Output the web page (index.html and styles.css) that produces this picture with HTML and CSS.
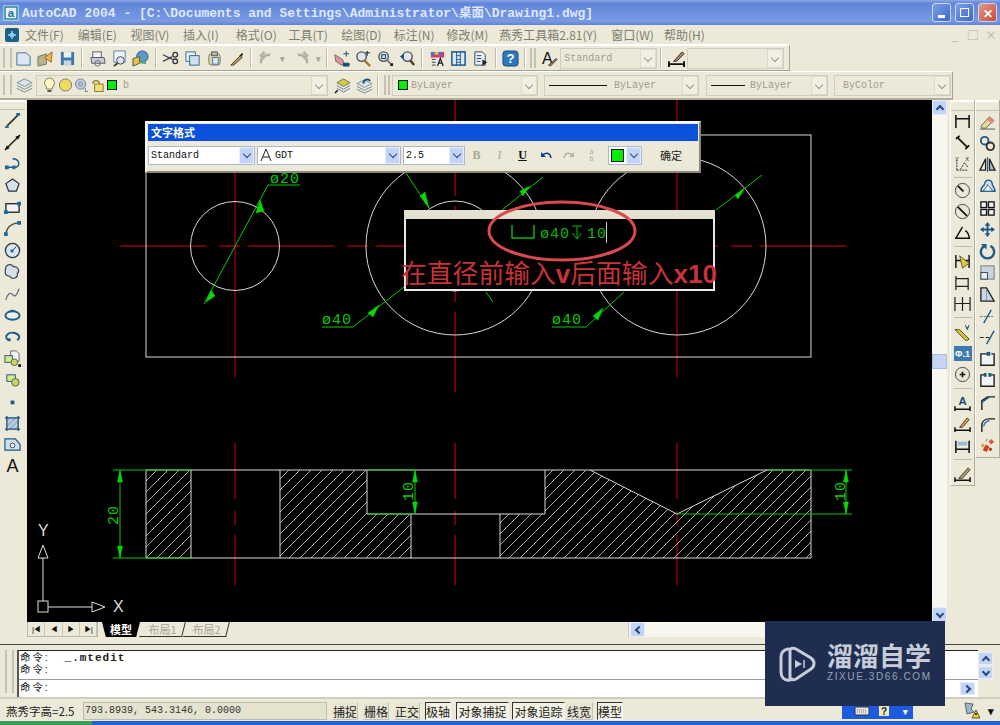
FILE: index.html
```html
<!DOCTYPE html>
<html lang="zh">
<head>
<meta charset="utf-8">
<title>AutoCAD 2004</title>
<link rel="stylesheet" href="styles.css">
</head>
<body>
<div class="app">
  <header class="titlebar">
    <svg class="app-icon" viewBox="0 0 18 18"><rect x="1" y="1" width="16" height="16" fill="#1b6f96" stroke="#cfe" /><rect x="3" y="3" width="12" height="12" fill="#e8f2f6"/><text x="9" y="14" class="app-a">a</text></svg>
    <span class="title-text">AutoCAD 2004 - [C:\Documents and Settings\Administrator\<span class="cjk">桌面</span>\Drawing1.dwg]</span>
    <div class="win-btns">
      <span class="win-btn"><i class="win-min"></i></span>
      <span class="win-btn"><i class="win-res"></i></span>
      <span class="win-btn win-close">✕</span>
    </div>
  </header>

  <nav class="menubar">
    <svg class="doc-icon" viewBox="0 0 16 16"><rect x="1" y="1" width="14" height="14" rx="2" fill="#1c5f88"/><path d="M4 8h8M8 4v8" stroke="#fff"/><rect x="6" y="6" width="4" height="4" fill="#7fd0f0"/></svg>
    <span class="m">文件(F)</span><span class="m">编辑(E)</span><span class="m">视图(V)</span><span class="m">插入(I)</span><span class="m">格式(O)</span><span class="m">工具(T)</span><span class="m">绘图(D)</span><span class="m">标注(N)</span><span class="m">修改(M)</span><span class="m m-wide">燕秀工具箱2.81(Y)</span><span class="m">窗口(W)</span><span class="m">帮助(H)</span>
    <span class="doc-btns"><span>_</span><span>□</span><span>×</span></span>
  </nav>

  <div class="toolbar tb1">
    <i class="grip"></i>
    <span class="tool"><svg viewBox="0 0 18 18"><path d="M2 3h10l4 4v9H2z" fill="#dbe7f3" stroke="#3a6d9a"/></svg></span>
    <span class="tool"><svg viewBox="0 0 18 18"><path d="M1 7l9-3v11l-9 2z" fill="#b9b28c" stroke="#776"/><path d="M8 8l8-6-1 11z" fill="#e8b84c" stroke="#a06820"/></svg></span>
    <span class="tool"><svg viewBox="0 0 18 18"><rect x="2" y="2" width="14" height="14" fill="#3d78ad"/><rect x="5" y="2" width="8" height="6" fill="#e9f0f6"/><rect x="5" y="11" width="8" height="5" fill="#c9d6e3"/></svg></span>
    <i class="sep"></i>
    <span class="tool"><svg viewBox="0 0 18 18"><rect x="4" y="2" width="9" height="6" fill="#f4f4f4" stroke="#556"/><path d="M2 8h14l1 6H3z" fill="#c9cfd8" stroke="#556"/><circle cx="9" cy="14" r="3" fill="none" stroke="#667"/></svg></span>
    <span class="tool"><svg viewBox="0 0 18 18"><path d="M3 1h12v12H3z" fill="#eef3f8" stroke="#5a7fa2"/><circle cx="10" cy="11" r="4" fill="#d9e6f0" stroke="#445"/><path d="M7 14l-4 3" stroke="#443" stroke-width="2"/></svg></span>
    <span class="tool"><svg viewBox="0 0 18 18"><circle cx="11" cy="7" r="6" fill="#5b9bcb" stroke="#357"/><path d="M1 9l7-2v7l-7 3z" fill="#e4c24a" stroke="#553"/><path d="M8 13l7 1" stroke="#6a6" stroke-width="2"/></svg></span>
    <i class="sep"></i>
    <span class="tool"><svg viewBox="0 0 18 18"><path d="M1 5l10 5M1 12l10-5" stroke="#445" stroke-width="1.4"/><circle cx="14" cy="5" r="2.5" fill="none" stroke="#334" stroke-width="1.4"/><circle cx="14" cy="12" r="2.5" fill="none" stroke="#334" stroke-width="1.4"/></svg></span>
    <span class="tool"><svg viewBox="0 0 18 18"><rect x="2" y="2" width="10" height="10" fill="#e5edf5" stroke="#3f719d"/><rect x="6" y="6" width="10" height="10" fill="#d2e0ee" stroke="#2f618d"/></svg></span>
    <span class="tool"><svg viewBox="0 0 18 18"><rect x="3" y="4" width="12" height="12" rx="3" fill="#e5d59a" stroke="#776"/><rect x="6" y="2" width="6" height="4" fill="#bbb" stroke="#555"/><rect x="7" y="8" width="6" height="7" fill="#dbe7f3" stroke="#47a"/></svg></span>
    <span class="tool"><svg viewBox="0 0 18 18"><path d="M3 16L13 6l2 2L6 16z" fill="#c5a063" stroke="#432"/><path d="M12 6l3-3 1 2-2 2z" fill="#222"/></svg></span>
    <i class="sep"></i>
    <span class="tool tool-mid"><svg viewBox="0 0 18 18"><path d="M4 14C4 8 7 5 14 5M8 2L4 6l4 3" fill="none" stroke="#b4b0a0" stroke-width="2.5"/></svg></span><b class="mini mini-gap">▾</b>
    <span class="tool tool-mid"><svg viewBox="0 0 18 18"><path d="M14 14C14 8 11 5 4 5M10 2l4 4-4 3" fill="none" stroke="#b4b0a0" stroke-width="2.5"/></svg></span><b class="mini mini-end">▾</b>
    <i class="sep"></i>
    <span class="tool"><svg viewBox="0 0 18 18"><path d="M2 5l8 5 2 5-3 1-6-4z" fill="#d49aa0" stroke="#8a5a60"/><path d="M14 1v6M11 4h6M11 14h6v3h-6z" stroke="#14497a" fill="#14497a"/></svg></span>
    <span class="tool"><svg viewBox="0 0 18 18"><circle cx="7" cy="7" r="5" fill="#dde8ef" stroke="#555" stroke-width="1.5"/><path d="M10 11l6 6" stroke="#a07830" stroke-width="2.5"/><path d="M13 1v5M11 3h5" stroke="#123"/></svg></span>
    <span class="tool"><svg viewBox="0 0 18 18"><circle cx="7" cy="7" r="5" fill="#cfe0ec" stroke="#555" stroke-width="1.5"/><rect x="5" y="5" width="4" height="4" fill="none" stroke="#136"/><path d="M11 11l3 3" stroke="#777" stroke-width="2"/><path d="M14 14h3v3h-3z" fill="#222"/></svg></span>
    <span class="tool"><svg viewBox="0 0 18 18"><circle cx="9" cy="7" r="5" fill="#dde8ef" stroke="#555" stroke-width="1.5"/><path d="M12 11l4 5" stroke="#5a3a20" stroke-width="2.5"/><path d="M1 7l4-3v6z" fill="#14497a"/></svg></span>
    <i class="sep"></i>
    <span class="tool"><svg viewBox="0 0 18 18"><path d="M2 2h14v6H2z" fill="#d03a7a"/><path d="M2 2h4v3H2zM10 2h4v3h-4z" fill="#3a7ad0"/><path d="M6 2h4v3H6z" fill="#e0c830"/><path d="M3 10h4M3 13h4M3 16h4" stroke="#246"/><path d="M9 17l3-8 3 8M10 14h4" fill="none" stroke="#123" stroke-width="1.3"/></svg></span>
    <span class="tool"><svg viewBox="0 0 18 18"><rect x="2" y="2" width="14" height="14" fill="#dce8f2" stroke="#1d5a8a" stroke-width="1.6"/><path d="M7 2v14M11 2v14M7 6h4M7 10h4M7 13h4" stroke="#1d5a8a"/></svg></span>
    <span class="tool"><svg viewBox="0 0 18 18"><path d="M3 2h8l3 3v11H3z" fill="#eef2f6" stroke="#345"/><path d="M5 6h5M5 9h5M5 12h4" stroke="#246"/><path d="M11 10l5 3-5 4z" fill="#123"/></svg></span>
    <i class="sep"></i>
    <span class="tool"><svg viewBox="0 0 18 18"><rect x="1" y="1" width="16" height="16" rx="3" fill="#2b79bb" stroke="#154d7d"/><text x="9" y="14" class="help-q">?</text></svg></span>
    <i class="sep sep-end"></i>
    <i class="grip grip-sm"></i>
    <span class="tool"><svg viewBox="0 0 18 18"><text x="1" y="15" class="glyph-a">A</text><path d="M8 16l8-7 1 1-7 7z" fill="#a88a50" stroke="#433"/></svg></span>
    <span class="combo combo-std"><span class="combo-text">Standard</span><span class="arrow"></span></span>
    <i class="sep"></i>
    <span class="tool"><svg viewBox="0 0 18 18"><path d="M1 15h16M1 12v6M17 12v6" stroke="#111" stroke-width="2"/><path d="M6 12L15 2l2 2-8 8z" fill="#b09060" stroke="#322"/></svg></span>
    <span class="combo combo-dim"><span class="arrow"></span></span>
  </div>

  <div class="toolbar tb2">
    <i class="grip"></i>
    <span class="tool tool-l"><svg viewBox="0 0 18 18"><path d="M1 6l8-4 8 4-8 4z" fill="#dbe4ea" stroke="#78909c"/><path d="M1 9l8 4 8-4M1 12l8 4 8-4" fill="none" stroke="#6d8797"/></svg></span>
    <span class="combo combo-layer">
      <svg class="mi" viewBox="0 0 14 16"><path d="M7 1a5 5 0 0 1 3 9v2H4v-2A5 5 0 0 1 7 1z" fill="#fbf7c8" stroke="#8a8450"/><path d="M5 14h4" stroke="#555" stroke-width="2"/></svg>
      <svg class="mi" viewBox="0 0 16 16"><circle cx="8" cy="8" r="6.5" fill="#efdc5c" stroke="#777"/></svg>
      <svg class="mi" viewBox="0 0 16 16"><circle cx="7" cy="7" r="5.5" fill="#bcd" stroke="#789"/><circle cx="7" cy="7" r="2" fill="none" stroke="#789"/><path d="M12 11v4h3" fill="none" stroke="#678"/></svg>
      <svg class="mi" viewBox="0 0 16 16"><path d="M3 7a3.500 3.500 0 0 1 7 0" fill="none" stroke="#98862c" stroke-width="1.500"/><rect x="5" y="7" width="9" height="8" fill="#eee07a" stroke="#887620"/></svg>
      <i class="swatch"></i><span class="combo-text layer-name">b</span><span class="arrow"></span>
    </span>
    <span class="tool tool-l"><svg viewBox="0 0 18 18"><path d="M3 6l7-4 7 4-7 4z" fill="#d7ca55" stroke="#66803c"/><path d="M3 9l7 4 7-4M3 12l7 4 7-4" fill="none" stroke="#5d7fa0"/><path d="M1 17l3-3" stroke="#111" stroke-width="1.500"/></svg></span>
    <span class="tool tool-l"><svg viewBox="0 0 18 18"><path d="M1 7l8-4 8 4-8 4z" fill="#dbe4ea" stroke="#78909c"/><path d="M1 10l8 4 8-4M1 13l8 4 8-4" fill="none" stroke="#6d8797"/><path d="M8 7a4 4 0 0 1 7-3" fill="none" stroke="#14497a" stroke-width="2"/></svg></span>
    <i class="sep sep-tight"></i><i class="grip grip-sm"></i>
    <span class="combo combo-color"><i class="swatch swatch-bl"></i><span class="combo-text">ByLayer</span><span class="arrow"></span></span>
    <span class="combo combo-line"><i class="ln ln-l"></i><span class="combo-text">ByLayer</span><span class="arrow"></span></span>
    <span class="combo combo-weight"><i class="ln ln-s"></i><span class="combo-text">ByLayer</span><span class="arrow"></span></span>
    <span class="combo combo-plot"><span class="combo-text">ByColor</span><span class="arrow"></span></span>
  </div>

  <div class="main">
    <aside class="side side-left">
      <i class="vgrip"></i>
      <span class="slot"><svg viewBox="0 0 18 18"><path d="M3 15L15 3" stroke="#333" stroke-width="1.800"/><path d="M1 15h4v2H1zM13 1h4v3h-4z" fill="#1d6a9a"/></svg></span>
      <span class="slot"><svg viewBox="0 0 18 18"><path d="M1 17L17 1" stroke="#222" stroke-width="1.600"/><path d="M1 17l2-5 3 3zM17 1l-2 5-3-3z" fill="#111"/></svg></span>
      <span class="slot"><svg viewBox="0 0 18 18"><path d="M3 13h8c7 0 6-9-2-9" fill="none" stroke="#1d5a8a" stroke-width="1.500"/><path d="M1 11h4v4H1zM9 11h3v4H9z" fill="#1d6a9a"/></svg></span>
      <span class="slot"><svg viewBox="0 0 18 18"><path d="M9 2l7 5-3 8H5L2 7z" fill="#d8e3ee" stroke="#23303c" stroke-width="1.300"/></svg></span>
      <span class="slot"><svg viewBox="0 0 18 18"><rect x="2" y="5" width="14" height="9" fill="#eef2f6" stroke="#222" stroke-width="1.400"/><path d="M0 12h4v4H0zM14 3h4v4h-4z" fill="#1d6a9a"/></svg></span>
      <span class="slot"><svg viewBox="0 0 18 18"><path d="M2 17C2 9 7 4 15 3" fill="none" stroke="#444" stroke-width="1.500"/><path d="M0 13h4v4H0zM14 1h4v4h-4z" fill="#1d6a9a"/></svg></span>
      <span class="slot"><svg viewBox="0 0 18 18"><circle cx="9" cy="9" r="7.500" fill="#dde7ef" stroke="#2a3a48" stroke-width="1.400"/><path d="M9 9l4-4" stroke="#333"/><rect x="7" y="8" width="3" height="3" fill="#1d6a9a"/></svg></span>
      <span class="slot"><svg viewBox="0 0 18 18"><path d="M2 4c3-4 7-2 8 0 5-1 7 5 4 7 2 5-6 7-8 3-6 0-5-6-4-10z" fill="#d5e0ea" stroke="#3a4a58" stroke-width="1.300"/></svg></span>
      <span class="slot"><svg viewBox="0 0 18 18"><path d="M2 16c1-6 5-9 7-6s4 2 7-6" fill="none" stroke="#667" stroke-width="1.300"/></svg></span>
      <span class="slot"><svg viewBox="0 0 18 18"><ellipse cx="9" cy="9" rx="7.500" ry="4.500" fill="#e8eef3" stroke="#1d5a8a" stroke-width="2"/><path d="M7 3h4v2H7z" fill="#1d5a8a"/></svg></span>
      <span class="slot"><svg viewBox="0 0 18 18"><path d="M5 13C-1 10 4 4 10 5s8 5 4 8" fill="none" stroke="#1d5a8a" stroke-width="2"/><path d="M4 11h3v3H4z" fill="#1d5a8a"/></svg></span>
      <span class="slot"><svg viewBox="0 0 18 18"><path d="M7 1h6l3 3v8H7z" fill="#f3f3f3" stroke="#667"/><rect x="1" y="6" width="8" height="7" fill="#dbe58a" stroke="#1d5a8a"/><circle cx="11" cy="13" r="3.500" fill="#c4d56e" stroke="#4a6a30"/><path d="M15 15h3v3h-3z" fill="#222"/></svg></span>
      <span class="slot"><svg viewBox="0 0 18 18"><rect x="3" y="4" width="9" height="7" fill="#dbe58a" stroke="#1d5a8a"/><circle cx="12" cy="12" r="4" fill="#c4d56e" stroke="#4a6a30"/></svg></span>
      <span class="slot"><svg viewBox="0 0 18 18"><rect x="7" y="8" width="4" height="4" fill="#1d5a8a"/></svg></span>
      <span class="slot"><svg viewBox="0 0 18 18"><rect x="3" y="3" width="12" height="12" fill="#9fb9d0"/><path d="M3 9l6-6M3 15L15 3M9 15l6-6" stroke="#eef"/><path d="M1 3h16M1 15h16M3 1v16M15 1v16" stroke="#1d4a72" stroke-width="1.300"/></svg></span>
      <span class="slot"><svg viewBox="0 0 18 18"><path d="M1 3h11l5 6v6H1z" fill="#cfdfec" stroke="#1d5a8a" stroke-width="1.300"/><circle cx="9" cy="10" r="2.500" fill="#eef" stroke="#444"/></svg></span>
      <span class="slot slot-text">A</span>
    </aside>

    <div class="canvas">
      <svg class="drawing" viewBox="27 100 905 522">
        <defs>
          <pattern id="hatch" width="11" height="11" patternUnits="userSpaceOnUse">
            <path d="M-1 12L12 -1" class="hatch-line"/>
            <path d="M-2 2L2 -2M9 13L13 9" class="hatch-line"/>
          </pattern>
        </defs>
        <!-- centre lines -->
        <path class="red dashed" d="M120 246H850"/>
        <path class="red" d="M235 150V377"/>
        <path class="red dashed-v" d="M455 100V392"/>
        <path class="red" d="M677 100V377"/>
        <path class="red dashed-low" d="M235 443V585M455 443V585M677 443V585"/>
        <!-- top view -->
        <rect class="white" x="146" y="135" width="665" height="222"/>
        <circle class="white" cx="235" cy="246" r="44.500"/>
        <circle class="white" cx="455" cy="246" r="89"/>
        <circle class="white" cx="455" cy="246" r="45"/>
        <circle class="white" cx="677" cy="246" r="89"/>
        <!-- dims -->
        <path class="green" d="M204 304L268 185H300M322 327H353L404 287M552 327H586L624 292M406 173L429 208M543 177L502 210M486 292L493 302M716 210L762 175"/>
        <path class="arrowhead" d="M260 200L256 213 264 211zM211 290L206 302 215 296zM379 305L368 313 373 317zM603 308L593 316 598 320zM429 208L420 196 425 192zM530 186L520 191 523 196zM745 188L735 195 738 199z"/>
        <text class="dim" x="270" y="183">ø20</text>
        <text class="dim" x="322" y="324">ø40</text>
        <text class="dim" x="552" y="324">ø40</text>
        <!-- editor -->
        <rect class="editor" x="405" y="211" width="309" height="79"/>
        <rect class="editor-head" x="404" y="210" width="311" height="9"/>
        <path class="green-text-line" d="M512 225V238H534V225"/>
        <text class="dim dim-edit" x="540" y="238">ø40</text>
        <path class="green-thin" d="M572 226H582M577 226V238M572.500 233L577 239 581.500 233"/>
        <text class="dim dim-edit" x="587" y="238">10</text>
        <path class="cursor" d="M606.500 222V243"/>
        <ellipse class="callout" cx="562" cy="231" rx="73" ry="29"/>
        <text class="note" x="401" y="283">在直径前输入<tspan class="note-lat">v</tspan>后面输入<tspan class="note-lat">x10</tspan></text>
        <!-- front view -->
        <path class="hatched" d="M146 470H191V558H146z"/>
        <path class="hatched" d="M280 470H367V514H411V558H280z"/>
        <path class="hatched" d="M545 470H590L677 514 767 470H811V558H500V514H545z"/>
        <path class="white" d="M146 470H811V558H146zM191 470V558M280 470V558M367 470V514H545V470M411 514V558M500 514V558M590 470L677 514 767 470"/>
        <path class="green" d="M113 470H191M113 558H191M367 470H416M367 514H411M677 514H852M767 470H852M120 470V558M415 470V514M846 470V514"/>
        <path class="arrowhead" d="M120 470L117.500 482H122.500zM120 558L117.500 546H122.500zM415 470L412.500 482H417.500zM415 514L412.500 502H417.500zM846 470L843.500 482H848.500zM846 514L843.500 502H848.500z"/>
        <text class="dim" transform="translate(117.500 525) rotate(-90)">20</text>
        <text class="dim" transform="translate(413 501) rotate(-90)">10</text>
        <text class="dim" transform="translate(845 501) rotate(-90)">10</text>
        <!-- UCS -->
        <rect class="white-ucs" x="38" y="601" width="10" height="11"/>
        <path class="white-ucs" d="M48 607H92M92 602V612L105 607zM43 601V558M38 558H48L43 545z"/>
        <text class="ucs-t" x="113" y="612">X</text>
        <text class="ucs-t" x="38" y="536">Y</text>
      </svg>

      <section class="dialog">
        <div class="dialog-title">文字格式</div>
        <div class="dialog-row">
          <span class="dcombo dcombo-style"><span class="dtext">Standard</span><span class="arrow arrow-blue"></span></span>
          <span class="dcombo dcombo-font"><svg class="font-ico" viewBox="0 0 14 14"><path d="M7 1l-5 12M7 1l5 12M4 9h6" fill="none" stroke="#222"/></svg><span class="dtext">GDT</span><span class="arrow arrow-blue"></span></span>
          <span class="dcombo dcombo-size"><span class="dtext">2.5</span><span class="arrow arrow-blue"></span></span>
          <span class="fmt fmt-b">B</span>
          <span class="fmt fmt-i">I</span>
          <span class="fmt fmt-u">U</span>
          <span class="fmt"><svg viewBox="0 0 14 12"><path d="M2 3v5h5" fill="#12388c"/><path d="M3 7c3-4 8-4 9 2" fill="none" stroke="#12388c" stroke-width="1.500"/></svg></span>
          <span class="fmt"><svg viewBox="0 0 14 12"><path d="M12 3v5H7" fill="#b5b2a4"/><path d="M11 7C8 3 3 3 2 9" fill="none" stroke="#b5b2a4" stroke-width="1.500"/></svg></span>
          <span class="fmt fmt-stack">a<br>b</span>
          <span class="dcolor"><i class="swatch swatch-d"></i><span class="arrow arrow-blue"></span></span>
          <span class="ok">确定</span>
        </div>
      </section>
    </div>

    <div class="vscroll">
      <span class="sbtn"><i class="chev chev-up"></i></span>
      <span class="vtrack"><i class="vthumb"></i></span>
      <span class="sbtn"><i class="chev chev-down"></i></span>
    </div>

    <aside class="side-right">
      <div class="rcol rcol-1">
        <i class="vgrip"></i>
        <span class="rslot"><svg viewBox="0 0 18 18"><path d="M2 2v14M16 2v14M2 6h14" fill="none" stroke="#111" stroke-width="1.600"/></svg></span>
        <span class="rslot"><svg viewBox="0 0 18 18"><path d="M2 5l4-3M12 16l4-4M4 4l10 10" stroke="#111" stroke-width="1.800"/></svg></span>
        <span class="rslot"><svg viewBox="0 0 18 18"><path d="M3 16h12M3 5v11M7 15l4-7 4 5" fill="none" stroke="#222" stroke-dasharray="2 1"/><text x="1" y="6" class="tiny-t">Y</text><text x="12" y="6" class="tiny-t">X</text></svg></span>
        <i class="rsep rsep-s"></i>
        <span class="rslot"><svg viewBox="0 0 18 18"><circle cx="9" cy="9" r="7.500" fill="#e8e6d6" stroke="#444"/><path d="M4 4l6 6" stroke="#111" stroke-width="1.800"/></svg></span>
        <span class="rslot"><svg viewBox="0 0 18 18"><circle cx="9" cy="9" r="7.500" fill="#e8e6d6" stroke="#444"/><path d="M4 4l10 10" stroke="#111" stroke-width="1.800"/></svg></span>
        <span class="rslot"><svg viewBox="0 0 18 18"><path d="M2 15L9 3M1 15h16M12 7c3 2 4 5 4 8" fill="none" stroke="#111" stroke-width="1.500"/></svg></span>
        <i class="rsep"></i>
        <span class="rslot"><svg viewBox="0 0 18 18"><path d="M2 2v14M16 2v14M2 8h14" stroke="#111" stroke-width="1.500"/><path d="M6 3l10 8-7 5z" fill="#e0cc30" stroke="#554"/></svg></span>
        <span class="rslot"><svg viewBox="0 0 18 18"><path d="M2 2v15M15 4v13M2 5h13M2 13h13" fill="none" stroke="#222" stroke-width="1.300"/></svg></span>
        <span class="rslot"><svg viewBox="0 0 18 18"><path d="M1 2v15M9 2v15M17 2v15M1 9h16" fill="none" stroke="#222" stroke-width="1.300"/></svg></span>
        <i class="rsep"></i>
        <span class="rslot"><svg viewBox="0 0 18 18"><path d="M1 6h5l10 10-3 2L3 8z" fill="#d8c430" stroke="#443"/><path d="M12 1l2 5 2-5M13 4h2" fill="none" stroke="#14497a"/></svg></span>
        <span class="rslot rslot-tol"><span class="tol">Φ.1</span></span>
        <span class="rslot"><svg viewBox="0 0 18 18"><circle cx="9" cy="9" r="7.500" fill="#e8e6d6" stroke="#444"/><path d="M6 9h6M9 6v6" stroke="#111" stroke-width="1.800"/></svg></span>
        <i class="rsep"></i>
        <span class="rslot"><svg viewBox="0 0 18 18"><path d="M1 12v5M17 12v5M1 15h16" stroke="#111" stroke-width="1.600"/><text x="9" y="11" class="dim-a">A</text></svg></span>
        <span class="rslot"><svg viewBox="0 0 18 18"><path d="M1 12v5M17 12v5M1 15h16" stroke="#111" stroke-width="1.600"/><path d="M6 12L14 2l2 2-7 8z" fill="#e0a040" stroke="#533"/></svg></span>
        <span class="rslot"><svg viewBox="0 0 18 18"><path d="M2 4v13M16 4v13M2 13h14" stroke="#111" stroke-width="1.600"/><rect x="4" y="5" width="10" height="4" fill="#9db8d4"/></svg></span>
        <i class="rsep"></i>
        <span class="rslot"><svg viewBox="0 0 18 18"><path d="M1 12v5M17 12v5M1 15h16" stroke="#111" stroke-width="1.600"/><path d="M5 13L15 2l2 2-8 9z" fill="#a99a78" stroke="#443"/></svg></span>
      </div>
      <div class="rcol rcol-2">
        <i class="vgrip"></i>
        <span class="rslot2"><svg viewBox="0 0 18 18"><path d="M2 14L11 4l5 4-9 8H3z" fill="#e5d9a0" stroke="#665"/><path d="M11 4l5 4-3 3-5-4z" fill="#e48a80"/><path d="M1 17h16" stroke="#456"/></svg></span>
        <span class="rslot2"><svg viewBox="0 0 18 18"><circle cx="6" cy="6" r="4" fill="none" stroke="#1d5a8a" stroke-width="2"/><circle cx="12" cy="12" r="4" fill="none" stroke="#333" stroke-width="2"/></svg></span>
        <span class="rslot2"><svg viewBox="0 0 18 18"><path d="M7 3v12H1z" fill="none" stroke="#222" stroke-width="1.400"/><path d="M11 3v12h6z" fill="#9dbcd8" stroke="#222" stroke-width="1.400"/><path d="M9 1v16" stroke="#1d5a8a"/></svg></span>
        <span class="rslot2"><svg viewBox="0 0 18 18"><path d="M2 14c0-6 3-4 4-8 1-5 7-5 8 0 0 3 3 4 3 8z" fill="#cfe0ec" stroke="#1d5a8a" stroke-width="1.500"/><path d="M5 14c0-3 3-3 4-7 2 3 5 4 5 7z" fill="#eef2f6" stroke="#1d5a8a"/></svg></span>
        <span class="rslot2"><svg viewBox="0 0 18 18"><rect x="2" y="2" width="6" height="6" fill="#eef2f6" stroke="#111" stroke-width="1.400"/><rect x="10" y="2" width="6" height="6" fill="#eef2f6" stroke="#111" stroke-width="1.400"/><rect x="2" y="10" width="6" height="6" fill="#eef2f6" stroke="#111" stroke-width="1.400"/><rect x="10" y="10" width="6" height="6" fill="#eef2f6" stroke="#111" stroke-width="1.400"/></svg></span>
        <span class="rslot2"><svg viewBox="0 0 18 18"><path d="M9 1l3 4h-2v3h3V6l4 3-4 3v-2h-3v3h2l-3 4-3-4h2v-3H5v2L1 9l4-3v2h3V5H6z" fill="#1d5a8a"/></svg></span>
        <span class="rslot2"><svg viewBox="0 0 18 18"><path d="M6 3a7 7 0 1 0 6 0" fill="none" stroke="#1d5a8a" stroke-width="2.500"/><path d="M2 1h6v6z" fill="#1d5a8a"/></svg></span>
        <span class="rslot2"><svg viewBox="0 0 18 18"><rect x="2" y="2" width="14" height="14" fill="#c5d4e2" stroke="#777"/><rect x="2" y="9" width="7" height="7" fill="#e8eef3" stroke="#345"/></svg></span>
        <span class="rslot2"><svg viewBox="0 0 18 18"><path d="M2 2h6l8 14H2z" fill="#c8d8e6" stroke="#222" stroke-width="1.400"/><path d="M8 4v12" stroke="#678" stroke-dasharray="2 1"/></svg></span>
        <span class="rslot2"><svg viewBox="0 0 18 18"><path d="M1 9h14" stroke="#678" stroke-dasharray="3 1"/><path d="M5 16L13 2" stroke="#1d5a8a" stroke-width="1.500"/></svg></span>
        <span class="rslot2"><svg viewBox="0 0 18 18"><path d="M1 9h4M7 9h4" stroke="#222" stroke-width="1.300"/><path d="M8 16L16 2" stroke="#1d5a8a" stroke-width="1.500"/></svg></span>
        <span class="rslot2"><svg viewBox="0 0 18 18"><path d="M9 3H2v12h14V3h-3" fill="#f0f3f6" stroke="#222" stroke-width="1.500"/><path d="M8 1h4v4H8z" fill="#1d5a8a"/></svg></span>
        <span class="rslot2"><svg viewBox="0 0 18 18"><path d="M6 3H2v12h14V3h-4" fill="#f0f3f6" stroke="#222" stroke-width="1.500"/><path d="M5 1h3v4H5zM10 1h3v4h-3z" fill="#1d5a8a"/></svg></span>
        <span class="rslot2"><svg viewBox="0 0 18 18"><path d="M3 17V7l6-4h8" fill="none" stroke="#222" stroke-width="1.500"/><path d="M3 9L11 3" stroke="#1d5a8a" stroke-width="1.500"/></svg></span>
        <span class="rslot2"><svg viewBox="0 0 18 18"><path d="M3 17V10C3 6 6 3 11 3h6" fill="none" stroke="#222" stroke-width="1.500"/><path d="M5 11c0-3 3-6 6-6" fill="none" stroke="#2a7ab8" stroke-width="1.500"/></svg></span>
        <span class="rslot2"><svg viewBox="0 0 18 18"><path d="M4 14l3-6 4 2-3 6z" fill="#c8421e"/><path d="M10 5l3-3 3 3-3 3z" fill="#d85a30"/><path d="M2 8l3-1 1 3-3 1z" fill="#e0a040"/><path d="M11 11l3 1-1 3-3-1z" fill="#c83820"/><path d="M7 5l2-3" stroke="#679"/></svg></span>
      </div>
    </aside>
  </div>

  <div class="tabs">
    <div class="tab-nav">
      <span class="nav-btn">|◀</span><span class="nav-btn">◀</span><span class="nav-btn">▶</span><span class="nav-btn">▶|</span>
    </div>
    <span class="tab tab-active">模型</span>
    <span class="tab tab-off">布局1</span>
    <span class="tab tab-off">布局2</span>
    <div class="hscroll">
      <i class="hgrip"></i>
      <span class="sbtn sbtn-h"><i class="chev chev-left"></i></span>
      <span class="htrack"></span>
    </div>
  </div>

  <div class="splitter"></div>

  <div class="command">
    <i class="cmd-grip"></i>
    <div class="cmd-box">
      <div class="cmd-history">
        <div class="cmd-line">命令: <span class="cmd-mono">_.mtedit</span></div>
        <div class="cmd-line">命令:</div>
      </div>
      <div class="cmd-input">
        <div class="cmd-line">命令:</div>
      </div>
    </div>
    <div class="cmd-scroll">
      <span class="sbtn sbtn-c"><i class="chev chev-up"></i></span>
      <span class="sbtn sbtn-c"><i class="chev chev-down"></i></span>
    </div>
    <span class="sbtn sbtn-right"><i class="chev chev-right"></i></span>
  </div>

  <footer class="status">
    <span class="st-label">燕秀字高=2.5</span>
    <span class="st-coords">793.8939, 543.3146, 0.0000</span>
    <span class="st-btn st-w27">捕捉</span>
    <span class="st-btn st-w27">栅格</span>
    <span class="st-btn st-w27">正交</span>
    <span class="st-btn st-w27 st-on">极轴</span>
    <span class="st-btn st-w53 st-on">对象捕捉</span>
    <span class="st-btn st-w53 st-tight st-on">对象追踪</span>
    <span class="st-btn st-w28">线宽</span>
    <span class="st-btn st-w27 st-on">模型</span>
    <span class="st-tray">
      <svg class="tray-kb" viewBox="0 0 16 10"><rect x="1" y="1" width="14" height="8" rx="1" fill="#e6e6e0" stroke="#333"/><path d="M3 4h10M3 6h10" stroke="#777" stroke-dasharray="1 1"/></svg>
      <svg class="tray-help" viewBox="0 0 12 12"><rect x="1" y="0" width="10" height="11" fill="#f4e9b4"/><text x="6" y="10" class="tray-q">?</text></svg>
      <b class="tray-arrow">▾</b>
    </span>
    <svg class="st-warn" viewBox="0 0 18 18"><path d="M3 2l8 1-2 5 3 3-7 2z" fill="#9fb4c8" stroke="#567"/><path d="M10 17l4-8 4 8z" fill="#f0d020" stroke="#554"/><path d="M14 12v2" stroke="#111" stroke-width="1.500"/></svg>
    <b class="st-caret">▾</b>
  </footer>
  <div class="taskbar"><i class="start"></i></div>

  <aside class="logo">
    <svg class="logo-mark" viewBox="0 0 38 38"><path d="M9 4C4 5 2 8 2 12v15c0 5 3 9 9 8l2-1" fill="none" stroke="#c6ccd8" stroke-width="3" stroke-linecap="round"/><path d="M11 4c2-1 4-1 6 0l15 9c4 3 4 8 0 11L17 34c-2 1-4 1-6 0V4z" fill="none" stroke="#c6ccd8" stroke-width="3" stroke-linejoin="round"/><path d="M16 15l7 4-7 4z" fill="#c6ccd8"/><path d="M25 15v8" stroke="#c6ccd8" stroke-width="1.500"/></svg>
    <div class="logo-text">
      <div class="logo-cn">溜溜自学</div>
      <div class="logo-en">ZIXUE.3D66.COM</div>
    </div>
  </aside>
</div>
</body>
</html>
```
FILE: styles.css
```css
* { box-sizing: border-box; }
html, body { margin: 0; padding: 0; background: #ece9d8; }
body { font-family: "Noto Sans CJK SC", "Liberation Sans", sans-serif; overflow: hidden; }
i, b { display: block; font-style: normal; }
.app { position: relative; width: 1000px; height: 725px; overflow: hidden; background: #ece9d8; display: flex; flex-direction: column; }
svg { display: block; }

/* Title bar */
.titlebar { height: 25px; display: flex; align-items: center; padding-left: 3px; gap: 3px;
  background: linear-gradient(#8da6e6 0, #5f86da 14%, #6f92df 55%, #7a9ae2 85%, #5e82d6 100%); }
.app-icon { width: 16px; height: 16px; }
.app-a { font: bold 13px "Liberation Sans", sans-serif; text-anchor: middle; fill: #1b6f96; }
.title-text { font: bold 13px "Liberation Mono", "Noto Sans CJK SC", monospace; color: #dfe7fb; white-space: pre; margin-top: -2px; }
.title-text .cjk { font-family: "Noto Sans CJK SC", sans-serif; font-size: 12.500px; }
.win-btns { margin-left: auto; display: flex; gap: 4px; padding-right: 3px; }
.win-btn { width: 19px; height: 19px; border-radius: 3px; border: 1px solid #c9d6f5; background: linear-gradient(135deg, #7f9fe8, #3c66cc); color: #fff; display: flex; align-items: flex-end; justify-content: center; position: relative; }
.win-min { width: 7px; height: 3px; background: #fff; margin-bottom: 3px; }
.win-res { width: 9px; height: 9px; border: 1.500px solid #fff; margin-bottom: 4px; }
.win-close { background: linear-gradient(135deg, #e69a8c, #c84a34); align-items: center; font-size: 12px; font-weight: bold; }

/* Menu */
.menubar { height: 19px; display: flex; align-items: center; padding-left: 4px; font-size: 12px; color: #7f7d72; background: #ece9d8; }
.doc-icon { width: 16px; height: 16px; margin-right: 5px; }
.m { width: 52.700px; white-space: nowrap; font-size: 12px; }
.m-wide { width: 112px; }
.doc-btns { margin-left: auto; display: flex; gap: 6px; padding-right: 3px; color: #b5b2a5; font-size: 12px; }
.doc-btns span { width: 12px; text-align: center; }

/* Toolbars */
.toolbar { display: flex; align-items: center; background: #ece9d8; }
.tb1 { height: 27px; width: 790px; border-top: 2px solid #fff; border-bottom: 1px solid #a5a28f; border-right: 1px solid #a5a28f; padding-left: 3px; }
.tb2 { height: 29px; width: 953px; border-top: 1px solid #fff; border-bottom: 2px solid #b0ad9a; border-right: 1px solid #a5a28f; padding-left: 3px; }
.grip { width: 9px; height: 20px; margin-right: 1px; border-left: 2px solid #c5c2b0; border-right: 2px solid #c5c2b0; flex: none; }
.grip-sm { width: 6px; margin-left: 3px; margin-right: 2px; }
.tool { width: 21.800px; height: 20px; flex: none; display: flex; align-items: center; justify-content: center; }
.tool svg { width: 17px; height: 17px; }
.tool-mid { width: 22px; }
.tool-l { width: 22px; }
.mini { width: 11px; font-size: 9px; color: #aaa79a; text-align: center; flex: none; }
.mini-gap { margin-right: 4px; }
.mini-end { width: 9px; }
.sep { height: 20px; background: #bebbaa; margin: 0 3px; flex: none; border-right: 1px solid #fff; width: 2px; }
.sep-end { margin-right: 1px; }
.sep-tight { margin: 0 2px; }
.combo { height: 21px; flex: none; display: flex; align-items: center; border: 1px solid #d0cdbc; background: #ece9d8; position: relative; margin-right: 3px; }
.combo-text { font: 10px "Liberation Mono", monospace; color: #9f9d90; }
.arrow { width: 16px; height: 100%; margin-left: auto; background: #f1efe3; border: 1px solid #dedbcb; position: relative; flex: none; }
.arrow::after { content: ""; position: absolute; left: 4px; top: 5px; width: 5px; height: 5px; border-right: 1.500px solid #9a9888; border-bottom: 1.500px solid #9a9888; transform: rotate(45deg); }
.combo-std { width: 97px; padding-left: 3px; margin-right: 0; }
.combo-dim { width: 97px; margin-right: 0; }
.combo-layer { width: 292px; margin-left: 1px; padding-left: 5px; gap: 1px; }
.mi { width: 15px; height: 16px; flex: none; }
.swatch { width: 10px; height: 10px; background: #00ee00; border: 1px solid #111; flex: none; margin: 0 3px 0 1px; }
.layer-name { margin-left: 2px; }
.combo-color { width: 146px; padding-left: 4px; margin-right: 6px; gap: 1px; }
.swatch-bl { margin: 0 2px 0 1px; }
.combo-line { width: 155px; padding-left: 4px; gap: 6px; margin-right: 7px; }
.combo-weight { width: 122px; padding-left: 4px; gap: 5px; margin-right: 6px; }
.combo-plot { width: 117px; padding-left: 8px; margin-right: 0; }
.ln { height: 1px; background: #111; flex: none; }
.ln-l { width: 58px; margin-right: 1px; }
.ln-s { width: 34px; margin-right: 0; }

/* Main row */
.main { flex: none; height: 522px; display: flex; }
.side-left { width: 27px; flex: none; display: flex; flex-direction: column; align-items: center; background: #ece9d8; border-right: 2px solid transparent; }
.vgrip { height: 10px; width: 100%; flex: none; border-bottom: 1px solid #c5c2b0; border-top: 2px solid #fff; }
.slot { height: 21.600px; flex: none; width: 25px; display: flex; align-items: center; justify-content: center; }
.slot svg { width: 17px; height: 17px; }
.slot-text { font: 18px "Liberation Sans", sans-serif; color: #111; }
.canvas { width: 905px; flex: none; position: relative; background: #000; overflow: hidden; }
.drawing { width: 905px; height: 522px; }
.vscroll { width: 15px; flex: none; display: flex; flex-direction: column; background: #f7f6ef; }
.vtrack { flex: 1; position: relative; }
.vthumb { position: absolute; top: 239px; left: 0; width: 15px; height: 15px; background: #c5d6f5; border: 1px solid #a5bbea; }
.sbtn { width: 15px; height: 15px; flex: none; background: #c3d5f6; border: 1px solid #e7eefb; display: flex; align-items: center; justify-content: center; }
.chev { width: 6px; height: 6px; border-right: 2px solid #2a4a80; border-bottom: 2px solid #2a4a80; }
.chev-down { transform: translateY(-1px) rotate(45deg); }
.chev-up { transform: translateY(1px) rotate(225deg); }
.chev-left { transform: translateX(1px) rotate(135deg); }
.chev-right { transform: translateX(-1px) rotate(-45deg); }
.side-right { width: 53px; flex: none; display: flex; padding-left: 3px; align-items: flex-start; }
.rcol { width: 25px; flex: none; display: flex; flex-direction: column; align-items: center; background: #ece9d8; border-right: 1px solid #b0ad9a; border-bottom: 1px solid #b0ad9a; border-left: 1px solid #fff; }
.rcol .vgrip { height: 11px; }
.rslot { height: 21px; width: 100%; flex: none; display: flex; align-items: center; justify-content: center; }
.rslot svg, .rslot2 svg { width: 17px; height: 17px; }
.rslot2 { height: 21.600px; width: 100%; flex: none; display: flex; align-items: center; justify-content: center; }
.rsep { height: 8px; flex: none; width: 18px; position: relative; }
.rsep::after { content: ""; position: absolute; left: 0; right: 0; top: 3px; height: 1px; background: #bebbaa; }
.rsep-s { height: 6px; }
.tol { width: 18px; height: 15px; background: #3d7ab0; color: #fff; font: bold 9px "Liberation Sans", sans-serif; display: flex; align-items: center; justify-content: center; }
.tiny-t { font: 6px "Liberation Sans", sans-serif; fill: #222; }
.dim-a { font: bold 12px "Liberation Sans", sans-serif; text-anchor: middle; fill: #14497a; }

/* Drawing */
.red { stroke: #d40018; fill: none; }
.dashed { stroke-dasharray: 86 13 21 8; }
.dashed-v { stroke-dasharray: 22 50 24 10 60 12 24 10 100; }
.dashed-low { stroke-dasharray: 56 12 14 10 50; }
.white { stroke: #d8d8d8; fill: none; }
.white-ucs { stroke: #ddd; fill: none; }
.green { stroke: #08c808; fill: none; }
.green-thin { stroke: #08b808; fill: none; }
.green-text-line { stroke: #08b808; fill: none; stroke-width: 1.500; }
.arrowhead { fill: #08d808; stroke: #08c808; stroke-width: .500; }
.dim { font: 15px "Liberation Mono", monospace; fill: #0cc80c; letter-spacing: 1px; }
.dim-edit { font-size: 15px; fill: #0cb80c; letter-spacing: 1px; }
.editor { fill: #000; stroke: #e8e8e8; stroke-width: 2; }
.editor-head { fill: #e4e1d0; }
.cursor { stroke: #ccc; }
.callout { fill: none; stroke: #d84a50; stroke-width: 3; }
.note { font: 25.800px "Noto Sans CJK SC", sans-serif; fill: #c83238; }
.note-lat { font: bold 26px "Liberation Sans", sans-serif; }
.hatched { fill: url(#hatch); }
.hatch-line { stroke: #bdbdbd; stroke-width: .900; fill: none; }
.ucs-t { font: 16px "Liberation Sans", sans-serif; fill: #ddd; }
.help-q { font: bold 14px "Liberation Sans", sans-serif; text-anchor: middle; fill: #fff; }
.glyph-a { font: 17px "Liberation Sans", sans-serif; fill: #111; }

/* Dialog */
.dialog { position: absolute; left: 118px; top: 21px; width: 556px; height: 52px; background: #ece9d8; border: 2px solid #f8f7f0; border-right-color: #8a8878; border-bottom-color: #8a8878; padding: 1px; display: flex; flex-direction: column; }
.dialog-title { height: 17px; flex: none; background: #0a52dc; color: #fff; font-size: 11px; font-weight: bold; line-height: 17px; padding-left: 3px; }
.dialog-row { display: flex; align-items: center; height: 20px; margin-top: 4px; }
.dcombo { height: 19px; background: #fff; border: 1px solid #a9b8d3; display: flex; align-items: center; flex: none; }
.dtext { font: 10px "Liberation Mono", monospace; color: #111; padding-left: 2px; }
.dcombo-style { width: 107px; margin-right: 2px; }
.dcombo-font { width: 144px; margin-right: 2px; }
.dcombo-size { width: 62px; }
.font-ico { width: 14px; height: 14px; margin-left: 1px; }
.arrow-blue { width: 15px; background: #c3d5f6; border-color: #e7eefb; }
.arrow-blue::after { border-color: #2a4a80; left: 3.500px; top: 3px; }
.fmt { width: 23px; flex: none; display: flex; align-items: center; justify-content: center; font: bold 12px "Liberation Serif", serif; color: #aaa796; }
.fmt svg { width: 14px; height: 12px; }
.fmt-i { font-style: italic; font-weight: normal; }
.fmt-u { color: #111; text-decoration: underline; }
.fmt-stack { font: 7px/7px "Liberation Sans", sans-serif; text-align: center; }
.dcolor { width: 34px; height: 19px; border: 1px solid #a9b8d3; background: #fff; display: flex; align-items: center; margin-left: 5px; flex: none; }
.swatch-d { width: 13px; height: 13px; margin: 0 2px; }
.ok { font-size: 11px; color: #222; margin-left: 18px; }

/* Tabs */
.tabs { height: 20px; flex: none; display: flex; align-items: flex-start; padding-left: 27px; background: #ece9d8; }
.tab-nav { display: flex; width: 71px; height: 15px; border: 1px solid #bbb8a6; border-top: 0; flex: none; margin-right: 4px; }
.nav-btn { width: 17.500px; font: 8px/15px "Liberation Sans", sans-serif; text-align: center; color: #111; letter-spacing: -1px; border-right: 1px solid #c8c5b4; }
.tab { height: 15px; font-size: 11px; line-height: 15px; text-align: center; flex: none; position: relative; }
.tab-active { width: 38px; background: #000; color: #fff; font-weight: bold; clip-path: polygon(0 0, 100% 0, 90% 100%, 10% 100%); }
.tab-off { width: 43px; color: #a8a596; margin-left: 1px; }
.tab-off::after { content: ""; position: absolute; inset: 0; border-bottom: 1px solid #333; border-right: 1px solid #333; transform: skewX(-14deg); }
.hscroll { margin-left: auto; margin-right: 68px; width: 309px; height: 15px; display: flex; background: #f7f6ef; }
.hgrip { width: 6px; background: #ece9d8; border-right: 1px solid #c8c5b4; flex: none; margin-right: 1px; }
.sbtn-h { width: 15px; }
.htrack { flex: 1; }
.splitter { height: 8px; flex: none; border-top: 1px solid #ece9d8; position: relative; background: #ece9d8; }
.splitter::after { content: ""; position: absolute; left: 0; right: 0; top: 1px; height: 1px; background: #444; }

/* Command */
.command { height: 47px; flex: none; display: flex; position: relative; padding-left: 5px; }
.cmd-grip { width: 9px; height: 43px; margin-right: 3px; border-left: 2px solid #c5c2b0; border-right: 2px solid #c5c2b0; flex: none; }
.cmd-box { width: 961px; flex: none; background: #fff; border-top: 1px solid #222; border-left: 2px solid #555; display: flex; flex-direction: column; }
.cmd-history { height: 29px; padding-top: 1px; border-bottom: 1px solid #9a9a9a; }
.cmd-input { flex: 1; padding-top: 2px; }
.cmd-line { font: 10.400px/12px "Liberation Sans", "Noto Sans CJK SC", sans-serif; height: 12px; padding-left: 1px; color: #111; letter-spacing: 2px; white-space: pre; }
.cmd-mono { font: bold 11px "Liberation Mono", monospace; letter-spacing: 1px; margin-left: 10px; color: #222; }
.cmd-scroll { display: flex; flex-direction: column; gap: 1px; padding-top: 2px; }
.sbtn-c { height: 13px; }
.sbtn-right { position: absolute; left: 960px; top: 32px; height: 13px; }

/* Status */
.status { height: 24px; flex: none; display: flex; align-items: center; padding: 2px 0 0 6px; border-top: 2px solid #d0cdbc; font-size: 12px; position: relative; }
.st-label { width: 77px; flex: none; white-space: nowrap; color: #222; font-size: 11.500px; }
.st-coords { width: 244px; height: 18px; flex: none; background: #e5e2d0; border: 1px solid #bdbaa8; font: 10px/16px "Liberation Mono", monospace; color: #333; padding-left: 1px; margin-right: 5px; }
.st-btn { height: 18px; flex: none; text-align: center; line-height: 17px; border: 1px solid #ece9d8; border-right-color: #c5c2b0; border-bottom-color: #c5c2b0; color: #222; white-space: nowrap; font-size: 12px; overflow: hidden; background: #e7e4d2; }
.st-w27 { width: 26px; margin-right: 5px; }
.st-w28 { width: 28px; margin-right: 4px; }
.st-w53 { width: 53px; margin-right: 3px; }
.st-tight { margin-right: 0; }
.st-on { border-color: #333 #f8f8f0 #f8f8f0 #333; background: #f3f1e4; }
.st-tray { position: absolute; left: 842px; top: 4px; width: 71px; height: 16px; background: #1c5ae0; display: flex; align-items: center; padding-left: 12px; }
.tray-kb { width: 16px; height: 10px; margin-right: 8px; }
.tray-help { width: 12px; height: 12px; margin-right: 13px; }
.tray-q { font: bold 10px "Liberation Sans", sans-serif; text-anchor: middle; fill: #223; }
.tray-arrow { font-size: 9px; color: #fff; }
.st-warn { position: absolute; left: 962px; top: 2px; width: 18px; height: 18px; }
.st-caret { position: absolute; left: 988px; top: 3px; font-size: 11px; color: #111; }
.taskbar { height: 4px; flex: none; background: #2a5fd8; }
.start { width: 92px; height: 4px; background: #3f9a55; }

/* Watermark */
.logo { position: absolute; left: 765px; top: 621px; width: 180px; height: 85px; background: #1f2e50; display: flex; align-items: center; padding: 0 0 0 14px; gap: 10px; }
.logo-mark { width: 38px; height: 38px; flex: none; }
.logo-text { display: flex; flex-direction: column; }
.logo-cn { font: bold 26px/26px "Liberation Sans", "Noto Sans CJK SC", sans-serif; color: #c6ccd8; white-space: nowrap; }
.logo-en { font: 10px/12px "Liberation Sans", sans-serif; color: #9aa3b6; letter-spacing: 1.600px; white-space: nowrap; margin-top: 1px; }
```
